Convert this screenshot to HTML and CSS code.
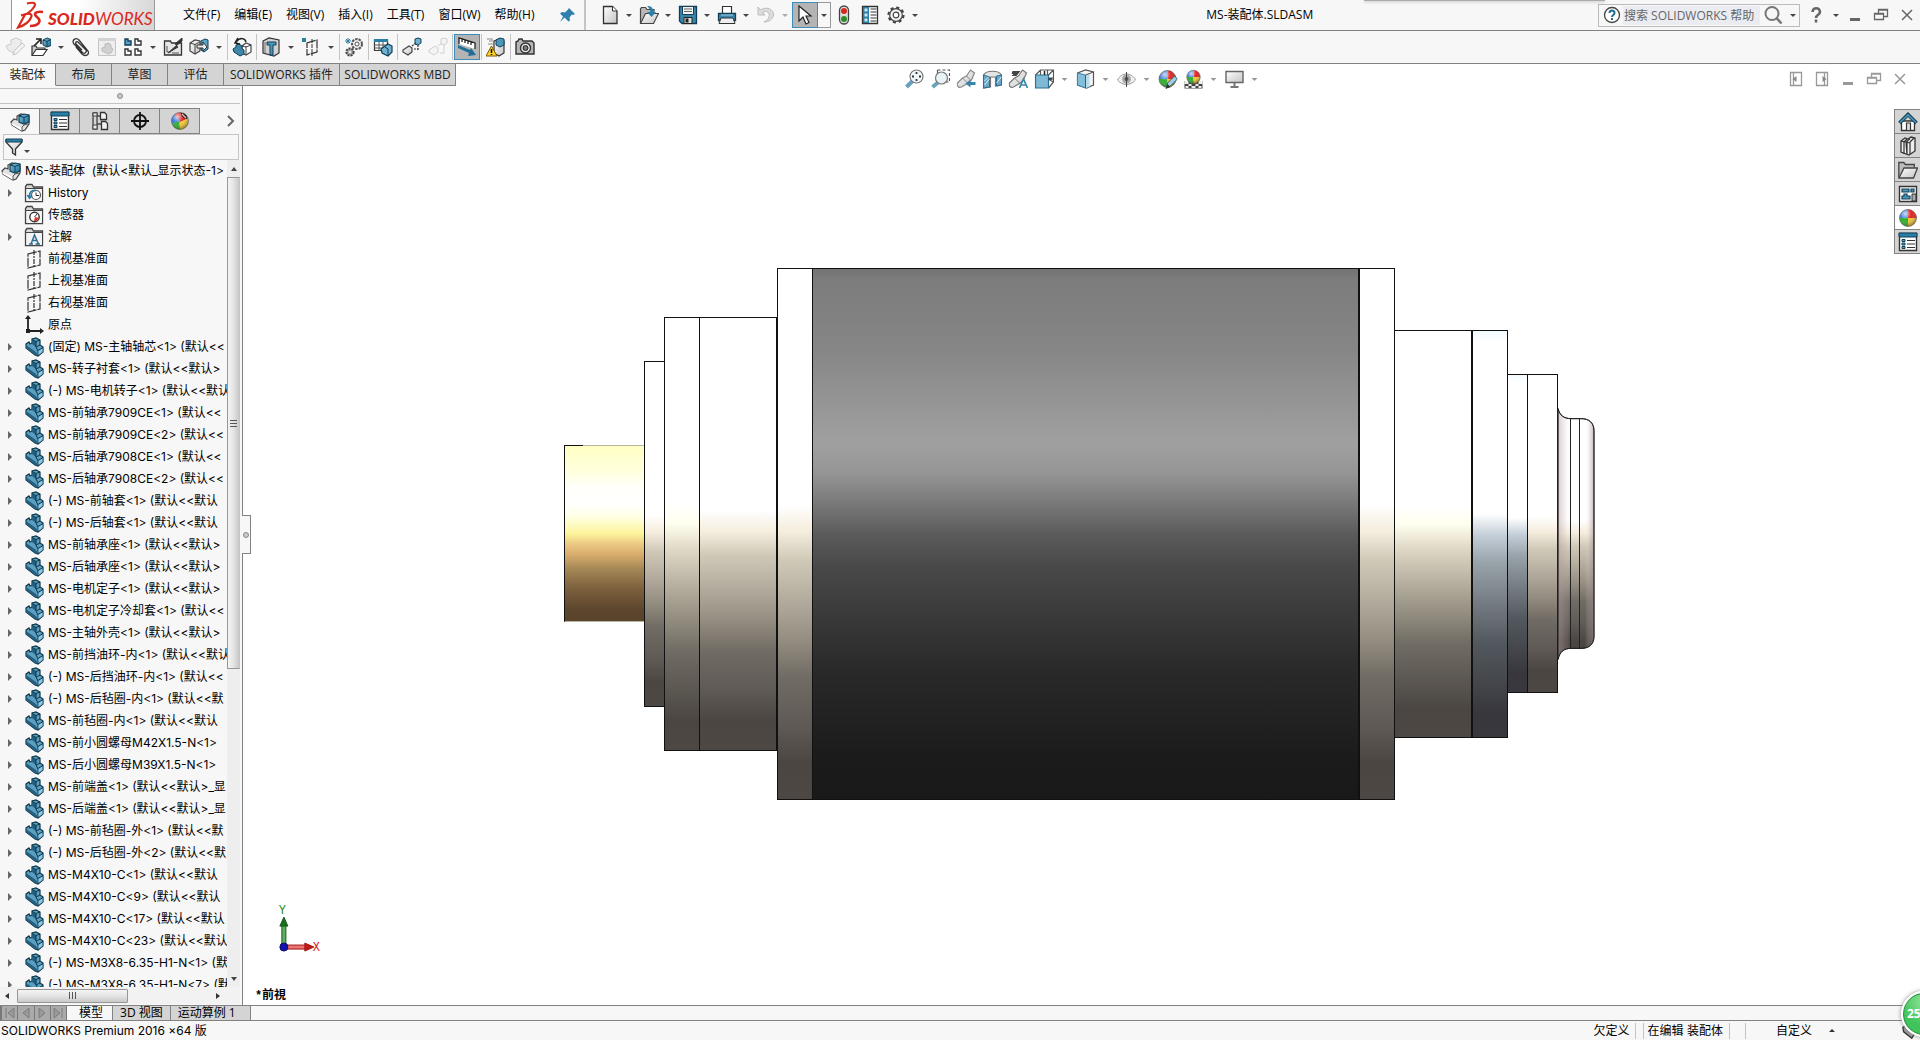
FILE: index.html
```html
<!DOCTYPE html>
<html lang="zh-CN">
<head>
    <meta charset="UTF-8">
    <meta name="viewport" content="width=device-width, initial-scale=1.0">
    <title>MS-装配体.SLDASM</title>
    <link rel="stylesheet" href="styles.css">
</head>
<body>
    <!-- 图标库 -->
    <svg class="defs" aria-hidden="true">
        <defs>
            <linearGradient id="gBlue" x1="0" y1="0" x2="1" y2="1"><stop offset="0" stop-color="#7fc0dc"/><stop offset="1" stop-color="#1d6c94"/></linearGradient>
            <linearGradient id="gGrey" x1="0" y1="0" x2="1" y2="1"><stop offset="0" stop-color="#ffffff"/><stop offset="1" stop-color="#c4c4c4"/></linearGradient>
            <radialGradient id="gShine" cx=".35" cy=".25" r=".8"><stop offset="0" stop-color="#fff" stop-opacity=".75"/><stop offset=".45" stop-color="#fff" stop-opacity="0"/><stop offset="1" stop-color="#000" stop-opacity=".45"/></radialGradient>
        </defs>
        <symbol id="part" viewBox="0 0 20 20">
            <path d="M2 7l3-2 1 2 2-1V2l4-1 4 2v5l3 2v5l-5 4-3-1L2 11z" fill="#5b9fc0" stroke="#0d3549" stroke-width="1.2"/>
            <path d="M2 8l10 7 2 4-3-1L2 11zM8 3l4 2v5l-4-3z" fill="#245f80"/>
            <path d="M8 2.500l4 2v5.500l2 4v4.500M12 4.500l4-1.500M14 13.500l5-3M12 10l4-2" fill="none" stroke="#0d3549"/>
            <path d="M14.500 14l4-2.500v3.500l-4 3z" fill="#8cc8e2"/>
        </symbol>
        <symbol id="asm" viewBox="0 0 20 20">
            <path d="M1 10l3-3 3 1V4l4-2 8 2v8l-4 6-3 1-10-6z" fill="#e2e2e2" stroke="#444" stroke-width="1.200"/>
            <path d="M1 11l11 5v3l-10-6z" fill="#fff"/>
            <path d="M9 4l5-2 5 1v7l-5 2-5-2z" fill="url(#gBlue)" stroke="#123f57" stroke-width="1.200"/>
            <path d="M9 4l5 1.500 5-2M14 5.500V12" fill="none" stroke="#123f57"/>
            <path d="M12 19v-4l2-2 4-1" fill="none" stroke="#555"/>
        </symbol>
        <symbol id="folder" viewBox="0 0 20 20">
            <path d="M1.500 18.500v-15l1.500-2h5l1.500 2.500h9v14.500z" fill="#d9d9d9" stroke="#444" stroke-width="1.300"/>
            <path d="M2.500 6h15.500v12H2.500z" fill="#f3f3f3"/>
            <path d="M1.500 5.500h17" stroke="#444"/>
        </symbol>
        <symbol id="history" viewBox="0 0 20 20">
            <use href="#folder"/>
            <circle cx="12" cy="12" r="4.500" fill="#fff" stroke="#555" stroke-width="1.200"/>
            <path d="M12 9.500V12.500h3" fill="none" stroke="#333"/>
            <path d="M12 7.500c-4-1-7 2-6.500 6M3.500 12l2 3 2.500-2.500" fill="none" stroke="#2b7fa6" stroke-width="1.800"/>
        </symbol>
        <symbol id="sensor" viewBox="0 0 20 20">
            <use href="#folder"/>
            <circle cx="10.500" cy="12" r="4.700" fill="#fff" stroke="#333" stroke-width="1.400"/>
            <path d="M10.500 12l2.500-3" stroke="#333"/>
            <path d="M11 12l4 1-3 3.200h-2z" fill="#d8341e"/>
        </symbol>
        <symbol id="note" viewBox="0 0 20 20">
            <use href="#folder"/>
            <path d="M5 17h4M11.500 17h4.500M7 17l3.500-9 4 9M8.500 13.500h4.500" fill="none" stroke="#2b6f94" stroke-width="1.500"/>
        </symbol>
        <symbol id="plane" viewBox="0 0 20 20">
            <path d="M4 5l12-3v14L4 19z" fill="none" stroke="#333" stroke-width="1.200" stroke-dasharray="9 1"/>
            <path d="M10 1v18" stroke="#333" stroke-width="1.200" stroke-dasharray="5 1 2 1"/>
        </symbol>
        <symbol id="origin" viewBox="0 0 20 20">
            <path d="M4 3v13h13" fill="none" stroke="#222" stroke-width="1.800"/>
            <path d="M4 0l3 4H1zM20 16l-4-3v6zM2 14h4v4H2z" fill="#222"/>
        </symbol>
        <symbol id="list" viewBox="0 0 20 20">
            <path d="M1.500 1.500h17v17h-17z" fill="#fff" stroke="#333" stroke-width="1.400"/>
            <path d="M1 1h18v4H1z" fill="#2b7fa6" stroke="#123f57"/>
            <path d="M4 7.500h3v2H4zM4 11h3v2H4zM4 14.500h3v2H4z" fill="#5aa5c8" stroke="#123f57"/>
            <path d="M9 8.500h8M9 12h8M9 15.500h8" stroke="#333" stroke-width="1.200"/>
        </symbol>
        <symbol id="config" viewBox="0 0 20 20">
            <path d="M3 2h4v16H3zM7 5h4M7 13h4" fill="none" stroke="#444" stroke-width="1.300"/>
            <path d="M3 2h4v3H3zM3 14h4v4H3z" fill="#eee" stroke="#444"/>
            <path d="M10.500 1.500h4l2 2v5h-6zM11.500 10.500h4l2 2v6h-6z" fill="#f2f2f2" stroke="#333" stroke-width="1.300"/>
        </symbol>
        <symbol id="target" viewBox="0 0 20 20">
            <circle cx="10" cy="10" r="6" fill="none" stroke="#111" stroke-width="1.800"/>
            <path d="M10 1v18M1 10h18" stroke="#111" stroke-width="1.800"/>
        </symbol>
        <symbol id="ball" viewBox="0 0 20 20">
            <path d="M10 10V1.500a8.500 8.500 0 0 0-8.500 8.500z" fill="#3c78d8"/>
            <path d="M10 10V1.500a8.500 8.500 0 0 1 8.500 8.500z" fill="#e02222"/>
            <path d="M10 10H1.500a8.500 8.500 0 0 0 8.500 8.500z" fill="#2fae2c"/>
            <path d="M10 10h8.500a8.500 8.500 0 0 1-8.500 8.500z" fill="#f3c637"/>
            <circle cx="10" cy="10" r="8.500" fill="url(#gShine)" stroke="#555" stroke-width=".6"/>
        </symbol>
        <symbol id="appearance" viewBox="0 0 20 20">
            <path d="M10 10L4 4a8.500 8.500 0 0 1 6-2.500z" fill="#e02222"/>
            <path d="M10 11V1.500a8.500 8.500 0 0 1 8 6z" fill="#e02222"/>
            <path d="M10 10V18.500a8.500 8.500 0 0 1-8-6z" fill="#2fae2c"/>
            <path d="M4.500 3.500L10 10l-8 2.500a8.500 8.500 0 0 1 2.500-9z" fill="#3c78d8"/>
            <path d="M9 11.500l9-4a8.500 8.500 0 0 1-8 11z" fill="#f6c934"/>
            <circle cx="10" cy="10" r="8.500" fill="url(#gShine)" stroke="#555" stroke-width=".6"/>
            <path d="M11 2c4 0 7 3 6 6-3 0-6-3-6-6z" fill="#222"/>
            <path d="M12 3l4 4" stroke="#d9b7b0" stroke-width="1.500"/>
        </symbol>
        <symbol id="funnel" viewBox="0 0 20 20">
            <path d="M2 3h16v2l-6.500 7v6l-3-2v-4L2 5z" fill="url(#gGrey)" stroke="#333" stroke-width="1.300"/>
            <path d="M2 2h16v3H2z" fill="#2b7fa6" stroke="#123f57"/>
        </symbol>
        <symbol id="doc" viewBox="0 0 20 20">
            <path d="M3.500 1.500h9l4.500 4.500v12.500H3.500z" fill="url(#gGrey)" stroke="#333" stroke-width="1.300"/>
            <path d="M12.500 1.500v4.500H17" fill="#fff" stroke="#333"/>
        </symbol>
        <symbol id="open" viewBox="0 0 20 20">
            <path d="M1.500 18V4l1-1.500h4l1.500 2h7V9" fill="#b9b9b9" stroke="#444" stroke-width="1.200"/>
            <path d="M1.500 18.500l5-10h13l-5 10z" fill="url(#gGrey)" stroke="#444" stroke-width="1.200"/>
            <path d="M8 1c5 0 6 2 6 6h3l-4.500 5L8 7h3c0-3-1-4-3-6z" fill="#2b7fa6"/>
        </symbol>
        <symbol id="save" viewBox="0 0 20 20">
            <path d="M1.500 1.500h17v17H4l-2.500-2.500z" fill="#3b85ab" stroke="#123f57" stroke-width="1.300"/>
            <path d="M4.500 1.500h11v8h-11z" fill="#f4f4f4" stroke="#123f57"/>
            <path d="M6 4h8M6 6.500h8" stroke="#666"/>
            <path d="M6 12.500h8v6H6z" fill="#ddd" stroke="#222"/><path d="M7.500 13.500h3v4h-3z" fill="#222"/>
        </symbol>
        <symbol id="print" viewBox="0 0 20 20">
            <path d="M5.500 8V1.500h9V8" fill="#fff" stroke="#333" stroke-width="1.200"/>
            <path d="M1.500 8.500h17v7h-17z" fill="#3b85ab" stroke="#123f57" stroke-width="1.300"/>
            <path d="M4 10h12" stroke="#9fd0e6"/>
            <path d="M4 13h12l2 5.500H2z" fill="#eee" stroke="#333"/>
        </symbol>
        <symbol id="undo" viewBox="0 0 20 20">
            <path d="M2 2v8h7L6.500 7.500c4-2.500 8 0 6.500 4.500-1 3-3 4-5 5 5 0 9-3 9.500-7C18 4 10 1 4.500 5z" fill="#ddd" stroke="#bdbdbd"/>
        </symbol>
        <symbol id="pointer" viewBox="0 0 20 20">
            <path d="M4 1v15l4-4 3 7 3-1.500-3-6.500h5z" fill="#fff" stroke="#222" stroke-width="1.200"/>
        </symbol>
        <symbol id="light" viewBox="0 0 20 20">
            <rect x="5.500" y="1" width="9" height="18" rx="4.500" fill="#ddd" stroke="#444" stroke-width="1.300"/>
            <circle cx="10" cy="6" r="3" fill="#d8281a"/><circle cx="10" cy="14" r="3" fill="#2e8b2a"/>
        </symbol>
        <symbol id="options" viewBox="0 0 20 20">
            <path d="M2.500 1.500h15v17h-15z" fill="#fff" stroke="#333" stroke-width="1.300"/>
            <path d="M3 2h6v16H3z" fill="#2b7fa6"/>
            <path d="M4.500 3.500h3v3h-3zM4.500 8.500h3v3h-3zM4.500 13.500h3v3h-3z" fill="#cfe6f1"/>
            <path d="M10.500 4h6M10.500 7h6M10.500 10h6M10.500 13h6M10.500 16h6" stroke="#333"/>
        </symbol>
        <symbol id="gear" viewBox="0 0 20 20">
            <circle cx="10" cy="10" r="7.300" fill="none" stroke="#444" stroke-width="2.600" stroke-dasharray="3 2.730"/>
            <circle cx="10" cy="10" r="6.300" fill="#f2f2f2" stroke="#444" stroke-width="1.200"/>
            <circle cx="10" cy="10" r="2.800" fill="#fff" stroke="#444" stroke-width="1.200"/>
        </symbol>
        <symbol id="pin" viewBox="0 0 20 20">
            <path d="M11 3l6 6-2 1-1-.5-2.500 3 .5 3-1.500 1-4-4L2 17l3-5.500-3-3L4 7l3 .5 3-3z" fill="#2d7fb0"/>
        </symbol>
        <symbol id="editpart" viewBox="0 0 20 20">
            <path d="M1 9l5-2V3l5-2 5 2v6l-6 8-7-4z" fill="#ececec" stroke="#ccc"/>
            <path d="M8 18l1-4 8-8 3 2.500-8 8z" fill="#f2f2f2" stroke="#c4c4c4"/>
        </symbol>
        <symbol id="insert" viewBox="0 0 20 20">
            <path d="M1 18V9h4l1 2h8v2" fill="#ccc" stroke="#333" stroke-width="1.200"/>
            <path d="M1 18.500l4-6h11l-4 6z" fill="#fff" stroke="#333" stroke-width="1.200"/>
            <path d="M3 9l6-6M5 2h5v5" fill="none" stroke="#222" stroke-width="1.600"/>
            <path d="M12 3l4-2 4 1.500v6L16 10l-4-2z" fill="url(#gBlue)" stroke="#123f57"/><path d="M12 3l4 1.500 4-2M16 4.500V10" fill="none" stroke="#123f57"/>
        </symbol>
        <symbol id="clip" viewBox="0 0 20 20">
            <path d="M5 10l6 7c3 3 8 1 6-3L8 3C5 0 0 3 3 7l9 9c2 1 4-1 3-3L7 5c-1-1-3 0-2 2l6 6" fill="none" stroke="#333" stroke-width="1.300"/>
        </symbol>
        <symbol id="window" viewBox="0 0 20 20">
            <path d="M1.500 1.500h17v17h-17z" fill="#eee" stroke="#c4c4c4"/><path d="M1 1h18v3H1z" fill="#d3d3d3"/>
            <path d="M5 11l3-1V7l4-1 2 2v3l2 1-2 4-3 1-6-3z" fill="#d0d0d0" stroke="#bbb"/>
        </symbol>
        <symbol id="pattern" viewBox="0 0 20 20">
            <path d="M2 2h3v2h3v4H2z" fill="#5aa5c8" stroke="#123f57" stroke-width="1.400"/>
            <path d="M12 2h3v2h3v4h-6zM2 12h3v2h3v4H2zM12 12h3v2h3v4h-6z" fill="#fff" stroke="#333" stroke-width="1.400"/>
        </symbol>
        <symbol id="smart" viewBox="0 0 20 20">
            <path d="M1.500 18V4h6l1 2h10v12z" fill="#e5e5e5" stroke="#333" stroke-width="1.300"/>
            <path d="M19 1l-7 6 2 1-9 8 10-6-2-1 6-5z" fill="#333" stroke="#333"/>
            <path d="M4 9v6h4M9 16h7" fill="none" stroke="#555"/>
        </symbol>
        <symbol id="move" viewBox="0 0 20 20">
            <path d="M1 6l5-3 5 1v10l-5 3-5-3z" fill="url(#gGrey)" stroke="#444" stroke-width="1.200"/>
            <path d="M12 4l4-2 3 1v9l-4 3-3-2z" fill="#5aa5c8" stroke="#123f57"/>
            <path d="M6 7v9M1 6l5 1.500L11 5" fill="none" stroke="#444"/>
            <path d="M8 8h6V5l4 5-4 4v-3H8z" fill="#eee" stroke="#333"/>
        </symbol>
        <symbol id="hidden" viewBox="0 0 20 20">
            <path d="M10 9l4-3 5 2v7l-5 3-4-2z" fill="#fff" stroke="#444" stroke-width="1.200"/>
            <path d="M14 9v9M10 9l4 1 5-2" fill="none" stroke="#444"/>
            <path d="M1 12l3-2V8l3-1 3 2v3l2 1v4l-4 2-6-4z" fill="#3f87a8" stroke="#123f57"/>
            <path d="M4 5c4-5 9-4 10 0M6 1L3 6l5 1" fill="none" stroke="#222" stroke-width="1.500"/>
        </symbol>
        <symbol id="feature" viewBox="0 0 20 20">
            <path d="M2 4l6-3 10 2v13l-5 3-11-3z" fill="#d2d2d2" stroke="#333" stroke-width="1.200"/>
            <path d="M6 5h9v3h-3v10H9V8H6z" fill="#4b98bb" stroke="#123f57"/><path d="M4 5v11" stroke="#777"/>
        </symbol>
        <symbol id="refgeo" viewBox="0 0 20 20">
            <path d="M1 1h4v4H1z" fill="#2b7fa6"/>
            <path d="M6 6l10-3v12L6 18z" fill="none" stroke="#333" stroke-width="1.200" stroke-dasharray="9 1"/><path d="M11 2v17" stroke="#333" stroke-dasharray="4 1"/>
        </symbol>
        <symbol id="motion" viewBox="0 0 20 20">
            <circle cx="13" cy="7" r="5" fill="#eee" stroke="#555" stroke-width="2" stroke-dasharray="2.500 1"/><circle cx="13" cy="7" r="2" fill="#fff" stroke="#555"/>
            <circle cx="6" cy="15" r="3.600" fill="#aaa" stroke="#444" stroke-width="2" stroke-dasharray="2 1"/><circle cx="6" cy="15" r="1" fill="#fff"/>
            <path d="M4 1v6M1 4h6M2 2l4 4M6 2L2 6" stroke="#2b7fa6"/>
        </symbol>
        <symbol id="bom" viewBox="0 0 20 20">
            <path d="M1.500 2.500h13v11h-13z" fill="#fff" stroke="#333" stroke-width="1.200"/><path d="M1 2h14v3H1z" fill="#2b7fa6"/>
            <path d="M6 5v9M10 5v9M1 8h14M1 11h14" stroke="#555"/>
            <path d="M8 12l4-3 3-2 4 2v6l-4 4-6-3z" fill="#6fb1cf" stroke="#123f57" stroke-width="1.200"/><path d="M12 10l3 2v6" fill="none" stroke="#123f57"/>
        </symbol>
        <symbol id="explode" viewBox="0 0 20 20">
            <path d="M1 13l3-2 3-2 3 2v4l-4 3-5-3z" fill="url(#gGrey)" stroke="#444" stroke-width="1.200"/>
            <path d="M13 2l3-1 3 1v4l-3 2-3-1z" fill="#6fb1cf" stroke="#123f57"/><path d="M10 9l4-3M16 8v5M12 12h4" stroke="#333" stroke-width="1.200" stroke-dasharray="2 1"/>
        </symbol>
        <symbol id="sketchline" viewBox="0 0 20 20">
            <g opacity=".3"><path d="M1 13l3-2 3-2 3 2v4l-4 3-5-3z" fill="#eee" stroke="#777"/><path d="M13 2l3-1 3 1v4l-3 2-3-1z" fill="#eee" stroke="#777"/><path d="M10 9l4-3M16 8v8M12 16h4" fill="none" stroke="#777"/></g>
        </symbol>
        <symbol id="ruler" viewBox="0 0 20 20">
            <path d="M2 1l16 5v6L2 7z" fill="#fff"/><path d="M2 7V1l16 5v6M5 2v3M8 3v3M11 4v3M14 5v3" fill="none" stroke="#222" stroke-width="1.300"/>
            <path d="M1 8l12 5 1-2 5 7-8 1 1-3L1 11z" fill="#1f6e98"/>
        </symbol>
        <symbol id="warn" viewBox="0 0 20 20">
            <path d="M3 4h4M2 7h5M1 2h6" stroke="#888"/>
            <path d="M8 4l5-2 5 2v12l-5 3-5-3z" fill="url(#gGrey)" stroke="#333" stroke-width="1.200"/>
            <path d="M10 3l4-2 4 1v6l-4 2-4-2z" fill="#4b98bb" stroke="#123f57"/>
            <path d="M5.500 9l5.500 10H0z" fill="#ffd42a" stroke="#7b5a00"/><path d="M5.500 12v4M5.500 17v1" stroke="#111" stroke-width="1.600"/>
        </symbol>
        <symbol id="camera" viewBox="0 0 20 20">
            <path d="M1 5l2-1 1-2h3l1 2h9l2 2v11H1z" fill="#b5b5b5" stroke="#333" stroke-width="1.400"/>
            <circle cx="10.500" cy="11" r="5" fill="#eee" stroke="#333" stroke-width="1.400"/><circle cx="10.500" cy="11" r="2.500" fill="#777" stroke="#222"/>
        </symbol>
        <symbol id="zoomfit" viewBox="0 0 20 20">
            <path d="M2 18l6-6" stroke="#6ba0bf" stroke-width="4"/>
            <circle cx="12" cy="7.500" r="6.500" fill="#eef6fa" stroke="#777" stroke-width="1.200"/>
            <path d="M12 3v2M12 10v2M7.500 7.500h2M14.500 7.500h2" stroke="#333" stroke-width="1.800"/>
        </symbol>
        <symbol id="zoomarea" viewBox="0 0 20 20">
            <path d="M7 1h12v12h-4M7 1v4" fill="none" stroke="#555" stroke-dasharray="3 2" stroke-width="1.200"/>
            <path d="M2 18l5-4" stroke="#6ba0bf" stroke-width="4"/><circle cx="11" cy="9" r="6" fill="#e6f2f6" stroke="#777" stroke-width="1.200"/>
        </symbol>
        <symbol id="prevview" viewBox="0 0 20 20">
            <path d="M1 14l5-5 4-2 4-6 4 3-3 7-3 3-7 4c-3 1-5-1-4-4z" fill="url(#gGrey)" stroke="#888" stroke-width="1.200"/><path d="M6 9l5 5M10 7l4 4" stroke="#888"/>
            <path d="M9 14.500l5-4v2.500h5v3h-5V18.500z" fill="#3b85ab"/>
        </symbol>
        <symbol id="section" viewBox="0 0 20 20">
            <path d="M1 6c3-5 15-5 18 0v10l-6 1V8H8v10l-7 1z" fill="#e5e5e5" stroke="#777" stroke-width="1.200"/>
            <path d="M1 6l6 2v10l-6 1zM14 7l5-1v10l-5 1z" fill="#69a8c8" stroke="#2b6f94"/><path d="M2 16l5-6M2 12l4-4M14 14l5-6" stroke="#d9eef7"/>
        </symbol>
        <symbol id="dynview" viewBox="0 0 20 20">
            <path d="M4 2h8L8 7H3l2-2H3z" fill="#444"/><path d="M1 14l5-5 4-2 4-6 4 3-3 7-3 3-7 4c-3 1-5-1-4-4z" fill="url(#gGrey)" stroke="#777" stroke-width="1.200"/><path d="M6 9l5 5" stroke="#777"/>
            <path d="M11 19l4-9 4 9M12 16h6" fill="none" stroke="#3b85ab" stroke-width="1.700"/>
        </symbol>
        <symbol id="orient" viewBox="0 0 20 20">
            <path d="M1 6l5-5h13v12l-5 6M6 1v5M19 1l-5 5M13 1v6M8 7l11 6M14 9h5" fill="none" stroke="#555" stroke-width="1.200"/>
            <path d="M1 6h13v13H1z" fill="#7fb9d5" stroke="#2b6f94" stroke-width="1.200"/><path d="M10 6V2M14 10h4" stroke="#222" stroke-width="1.500"/>
        </symbol>
        <symbol id="display" viewBox="0 0 20 20">
            <path d="M2 4l8-3 8 2v13l-7 3-9-3z" fill="#f4f4f4" stroke="#555" stroke-width="1.200"/>
            <path d="M2 4l8 2v13l-8-3z" fill="#84bfda" stroke="#3b85ab"/><path d="M10 6l4-1.200V18l-4 1z" fill="#b8dcec"/><path d="M10 6l8-3M10 6v13" stroke="#555"/>
        </symbol>
        <symbol id="eye" viewBox="0 0 20 20">
            <path d="M1 11c4-8 14-8 18 0-5 6-13 6-18 0z" fill="#f1f1f1" stroke="#999"/>
            <circle cx="10" cy="10" r="4.500" fill="#aaa"/><circle cx="10" cy="10" r="2" fill="#555"/><path d="M10 3v15" stroke="#444"/>
        </symbol>
        <symbol id="editcolor" viewBox="0 0 20 20">
            <use href="#ball"/><path d="M9 19l1-5 7-7 3 3-7 7z" fill="#9fcde2" stroke="#31576b"/><path d="M8 20l2-5 3 3z" fill="#333"/>
        </symbol>
        <symbol id="scene" viewBox="0 0 20 20">
            <path d="M1 12h18v7.500H1z" fill="#444"/><path d="M1 12h4v3H1zM15 12h4v3h-4zM5 15h3v2H5zM12 15h3v2h-3zM8 17h4v2H8zM2 17h3v2H2zM15 17h3v2h-3z" fill="#eee"/>
            <use href="#ball" x="2" y="0" width="16" height="16"/>
        </symbol>
        <symbol id="monitor" viewBox="0 0 20 20">
            <path d="M1.500 2.500h17v11h-17z" fill="url(#gGrey)" stroke="#666" stroke-width="1.400"/><path d="M9 14h2v3h3v2H6v-2h3z" fill="#777"/>
        </symbol>
        <symbol id="prevpane" viewBox="0 0 20 20"><path d="M4.500 3.500h11v13h-11zM7.500 3v13" fill="none" stroke="#999" stroke-width="1.300"/><path d="M10.500 7v6L6.500 10z" fill="#888"/></symbol>
        <symbol id="nextpane" viewBox="0 0 20 20"><path d="M4.500 3.500h11v13h-11zM12.500 3v13" fill="none" stroke="#999" stroke-width="1.300"/><path d="M10.500 7v6l4-3z" fill="#888"/></symbol>
        <symbol id="min" viewBox="0 0 20 20"><path d="M5 13h10v3H5z" fill="currentColor"/></symbol>
        <symbol id="restore" viewBox="0 0 20 20"><path d="M7.500 8V4.500h9v7H13M3.500 8.500h9v6h-9zM3.500 9h9M7.500 5h9" fill="none" stroke="currentColor" stroke-width="1.300"/></symbol>
        <symbol id="close" viewBox="0 0 20 20"><path d="M5 5l10 10M15 5L5 15" stroke="currentColor" stroke-width="1.500"/></symbol>
        <symbol id="chevron" viewBox="0 0 20 20"><path d="M8 5l5 5-5 5" fill="none" stroke="#666" stroke-width="2"/></symbol>
        <symbol id="help" viewBox="0 0 20 20"><circle cx="10" cy="10" r="7.500" fill="#fff" stroke="#444" stroke-width="1.300"/><path d="M7.500 8c0-3.500 5-3.500 5 0 0 2-2.500 2-2.500 4M10 13v2" fill="none" stroke="#1f6e98" stroke-width="2"/></symbol>
        <symbol id="question" viewBox="0 0 20 20"><path d="M6.500 7c0-5 7.500-5 7.500 0 0 3-4 2.500-4 6M10 14.500v3" fill="none" stroke="#666" stroke-width="2.600"/></symbol>
        <symbol id="search" viewBox="0 0 20 20"><circle cx="9" cy="8.500" r="6.500" fill="none" stroke="#777" stroke-width="2"/><path d="M13.500 13l5 5.500" stroke="#777" stroke-width="2.600"/></symbol>
        <symbol id="home" viewBox="0 0 20 20">
            <path d="M3.500 9h13v9.500h-13z" fill="#fff" stroke="#333" stroke-width="1.300"/><path d="M8.500 18v-7h4v7" fill="#ddd" stroke="#333" stroke-width="1.200"/>
            <path d="M1.500 11L10 2.500l8.500 8.500" fill="none" stroke="#123f57" stroke-width="3.600"/><path d="M2 10.500L10 2.800l8 7.700" fill="none" stroke="#4b98bb" stroke-width="1.600"/>
        </symbol>
        <symbol id="books" viewBox="0 0 20 20">
            <path d="M3 5l4-3 3 1 3-2 4 1v13l-6 4-8-3z" fill="#eee" stroke="#333" stroke-width="1.300"/><path d="M3 5l3 1v12M6 6l3-3M9 4.500v14l-1-12 4-4M12 6v12M12 6l4-4M3 5l9 2" fill="none" stroke="#333" stroke-width="1.200"/>
        </symbol>
        <symbol id="explorer" viewBox="0 0 20 20">
            <path d="M.8 17.500v-15h5l1.500 2h9v3" fill="#bbb" stroke="#444" stroke-width="1.300"/><path d="M1 18l5-10h13.500l-4 10z" fill="url(#gGrey)" stroke="#444" stroke-width="1.300"/>
        </symbol>
        <symbol id="palette" viewBox="0 0 20 20">
            <path d="M1.500 2.500h17v15h-17z" fill="#fff" stroke="#333" stroke-width="1.400"/>
            <path d="M4 5h7v3H4zM13 5h3v3h-3zM6 10h3v2h3v3H4v-3h2z" fill="#4b98bb" stroke="#123f57" stroke-width="1.200"/><path d="M14 10h4v7h-4z" fill="#aaa" stroke="#333"/>
        </symbol>
    </svg>

    <header class="titlebar">
        <div class="logo">
            <svg class="logo-mark" viewBox="0 0 28 28" aria-hidden="true">
                <path d="M11 2.500c6-1.500 10-1 7 3.500-2 3-5 6-9 7.500" fill="none" stroke="#da291c" stroke-width="2.200"/>
                <path d="M5 14.500c8-3 12-2 10 2-2 5-7 8-13 10l7-13" fill="none" stroke="#da291c" stroke-width="2.200"/>
                <path d="M27 11c-8-1-10 2-6 5 5 4 2 9-7 9" fill="none" stroke="#da291c" stroke-width="2.600"/>
            </svg>
            <span class="logo-text"><b>SOLID</b>WORKS</span>
        </div>
        <nav class="menu">
            <button>文件(F)</button>
            <button>编辑(E)</button>
            <button>视图(V)</button>
            <button>插入(I)</button>
            <button>工具(T)</button>
            <button>窗口(W)</button>
            <button>帮助(H)</button>
        </nav>
        <button class="ico pin" aria-label="固定"><svg><use href="#pin"/></svg></button>
        <div class="quick">
            <button class="ico" aria-label="新建"><svg><use href="#doc"/></svg></button><button class="drop" aria-label="更多"></button>
            <button class="ico" aria-label="打开"><svg><use href="#open"/></svg></button><button class="drop" aria-label="更多"></button>
            <button class="ico" aria-label="保存"><svg><use href="#save"/></svg></button><button class="drop" aria-label="更多"></button>
            <button class="ico" aria-label="打印"><svg><use href="#print"/></svg></button><button class="drop" aria-label="更多"></button>
            <button class="ico" aria-label="撤消"><svg><use href="#undo"/></svg></button><button class="drop dim" aria-label="更多"></button>
            <button class="ico on" aria-label="选择"><svg><use href="#pointer"/></svg></button><button class="drop boxed" aria-label="更多"></button>
            <button class="ico" aria-label="重建模型"><svg><use href="#light"/></svg></button>
            <button class="ico" aria-label="文件属性"><svg><use href="#options"/></svg></button>
            <button class="ico" aria-label="选项"><svg><use href="#gear"/></svg></button><button class="drop" aria-label="更多"></button>
        </div>
        <h1 class="doc-title">MS-装配体.SLDASM</h1>
        <div class="search">
            <svg><use href="#help"/></svg>
            <input type="text" placeholder="搜索 SOLIDWORKS 帮助" aria-label="搜索帮助">
            <button class="ico" aria-label="搜索"><svg><use href="#search"/></svg></button><button class="drop" aria-label="更多"></button>
        </div>
        <div class="win-btns">
            <button class="ico" aria-label="帮助"><svg><use href="#question"/></svg></button><button class="drop" aria-label="更多"></button>
            <button class="ico" aria-label="最小化"><svg><use href="#min"/></svg></button>
            <button class="ico" aria-label="还原"><svg><use href="#restore"/></svg></button>
            <button class="ico" aria-label="关闭"><svg><use href="#close"/></svg></button>
        </div>
        <div class="top-shadow"></div>
    </header>

    <div class="toolbar">
        <button class="ico" aria-label="编辑零部件"><svg><use href="#editpart"/></svg></button>
        <button class="ico" aria-label="插入零部件"><svg><use href="#insert"/></svg></button><button class="drop" aria-label="更多"></button>
        <button class="ico" aria-label="配合"><svg><use href="#clip"/></svg></button>
        <button class="ico" aria-label="零部件预览窗口"><svg><use href="#window"/></svg></button>
        <button class="ico" aria-label="线性零部件阵列"><svg><use href="#pattern"/></svg></button><button class="drop" aria-label="更多"></button>
        <button class="ico" aria-label="智能扣件"><svg><use href="#smart"/></svg></button>
        <button class="ico" aria-label="移动零部件"><svg><use href="#move"/></svg></button><button class="drop" aria-label="更多"></button>
        <i class="sep"></i>
        <button class="ico" aria-label="显示隐藏的零部件"><svg><use href="#hidden"/></svg></button>
        <i class="sep"></i>
        <button class="ico" aria-label="装配体特征"><svg><use href="#feature"/></svg></button><button class="drop" aria-label="更多"></button>
        <button class="ico" aria-label="参考几何体"><svg><use href="#refgeo"/></svg></button><button class="drop" aria-label="更多"></button>
        <i class="sep"></i>
        <button class="ico" aria-label="新建运动算例"><svg><use href="#motion"/></svg></button>
        <i class="sep"></i>
        <button class="ico" aria-label="材料明细表"><svg><use href="#bom"/></svg></button>
        <i class="sep"></i>
        <button class="ico" aria-label="爆炸视图"><svg><use href="#explode"/></svg></button>
        <button class="ico" aria-label="爆炸直线草图"><svg><use href="#sketchline"/></svg></button>
        <i class="sep"></i>
        <button class="ico on" aria-label="Instant3D"><svg><use href="#ruler"/></svg></button>
        <i class="sep"></i>
        <button class="ico" aria-label="更新"><svg><use href="#warn"/></svg></button>
        <i class="sep"></i>
        <button class="ico" aria-label="拍快照"><svg><use href="#camera"/></svg></button>
    </div>

    <div class="cm-tabs">
        <button class="active">装配体</button>
        <button>布局</button>
        <button>草图</button>
        <button>评估</button>
        <button class="wide">SOLIDWORKS 插件</button>
        <button class="wide">SOLIDWORKS MBD</button>
    </div>

    <main class="work">
        <aside class="panel">
            <div class="grip"><i class="dot"></i></div>
            <div class="fm-tabs">
                <button class="active" aria-label="FeatureManager 设计树"><svg><use href="#asm"/></svg></button>
                <button aria-label="PropertyManager"><svg><use href="#list"/></svg></button>
                <button aria-label="ConfigurationManager"><svg><use href="#config"/></svg></button>
                <button aria-label="DimXpertManager"><svg><use href="#target"/></svg></button>
                <button aria-label="DisplayManager"><svg><use href="#appearance"/></svg></button>
                <button class="more" aria-label="更多标签"><svg><use href="#chevron"/></svg></button>
            </div>
            <label class="filter"><svg><use href="#funnel"/></svg><i class="caret"></i><input type="text" aria-label="过滤"></label>
            <div class="tree-wrap">
                <ul class="tree">
                    <li class="root"><svg><use href="#asm"/></svg>MS-装配体&nbsp; (默认&lt;默认_显示状态-1&gt;</li>
                    <li class="has"><svg><use href="#history"/></svg>History</li>
                    <li><svg><use href="#sensor"/></svg>传感器</li>
                    <li class="has"><svg><use href="#note"/></svg>注解</li>
                    <li><svg><use href="#plane"/></svg>前视基准面</li>
                    <li><svg><use href="#plane"/></svg>上视基准面</li>
                    <li><svg><use href="#plane"/></svg>右视基准面</li>
                    <li><svg><use href="#origin"/></svg>原点</li>
                    <li class="has"><svg><use href="#part"/></svg>(固定) MS-主轴轴芯&lt;1&gt; (默认&lt;&lt;</li>
                    <li class="has"><svg><use href="#part"/></svg>MS-转子衬套&lt;1&gt; (默认&lt;&lt;默认&gt;</li>
                    <li class="has"><svg><use href="#part"/></svg>(-) MS-电机转子&lt;1&gt; (默认&lt;&lt;默认</li>
                    <li class="has"><svg><use href="#part"/></svg>MS-前轴承7909CE&lt;1&gt; (默认&lt;&lt;</li>
                    <li class="has"><svg><use href="#part"/></svg>MS-前轴承7909CE&lt;2&gt; (默认&lt;&lt;</li>
                    <li class="has"><svg><use href="#part"/></svg>MS-后轴承7908CE&lt;1&gt; (默认&lt;&lt;</li>
                    <li class="has"><svg><use href="#part"/></svg>MS-后轴承7908CE&lt;2&gt; (默认&lt;&lt;</li>
                    <li class="has"><svg><use href="#part"/></svg>(-) MS-前轴套&lt;1&gt; (默认&lt;&lt;默认</li>
                    <li class="has"><svg><use href="#part"/></svg>(-) MS-后轴套&lt;1&gt; (默认&lt;&lt;默认</li>
                    <li class="has"><svg><use href="#part"/></svg>MS-前轴承座&lt;1&gt; (默认&lt;&lt;默认&gt;</li>
                    <li class="has"><svg><use href="#part"/></svg>MS-后轴承座&lt;1&gt; (默认&lt;&lt;默认&gt;</li>
                    <li class="has"><svg><use href="#part"/></svg>MS-电机定子&lt;1&gt; (默认&lt;&lt;默认&gt;</li>
                    <li class="has"><svg><use href="#part"/></svg>MS-电机定子冷却套&lt;1&gt; (默认&lt;&lt;</li>
                    <li class="has"><svg><use href="#part"/></svg>MS-主轴外壳&lt;1&gt; (默认&lt;&lt;默认&gt;</li>
                    <li class="has"><svg><use href="#part"/></svg>MS-前挡油环-内&lt;1&gt; (默认&lt;&lt;默认</li>
                    <li class="has"><svg><use href="#part"/></svg>(-) MS-后挡油环-内&lt;1&gt; (默认&lt;&lt;</li>
                    <li class="has"><svg><use href="#part"/></svg>(-) MS-后毡圈-内&lt;1&gt; (默认&lt;&lt;默</li>
                    <li class="has"><svg><use href="#part"/></svg>MS-前毡圈-内&lt;1&gt; (默认&lt;&lt;默认</li>
                    <li class="has"><svg><use href="#part"/></svg>MS-前小圆螺母M42X1.5-N&lt;1&gt;</li>
                    <li class="has"><svg><use href="#part"/></svg>MS-后小圆螺母M39X1.5-N&lt;1&gt;</li>
                    <li class="has"><svg><use href="#part"/></svg>MS-前端盖&lt;1&gt; (默认&lt;&lt;默认&gt;_显</li>
                    <li class="has"><svg><use href="#part"/></svg>MS-后端盖&lt;1&gt; (默认&lt;&lt;默认&gt;_显</li>
                    <li class="has"><svg><use href="#part"/></svg>(-) MS-前毡圈-外&lt;1&gt; (默认&lt;&lt;默</li>
                    <li class="has"><svg><use href="#part"/></svg>(-) MS-后毡圈-外&lt;2&gt; (默认&lt;&lt;默</li>
                    <li class="has"><svg><use href="#part"/></svg>MS-M4X10-C&lt;1&gt; (默认&lt;&lt;默认</li>
                    <li class="has"><svg><use href="#part"/></svg>MS-M4X10-C&lt;9&gt; (默认&lt;&lt;默认</li>
                    <li class="has"><svg><use href="#part"/></svg>MS-M4X10-C&lt;17&gt; (默认&lt;&lt;默认</li>
                    <li class="has"><svg><use href="#part"/></svg>MS-M4X10-C&lt;23&gt; (默认&lt;&lt;默认</li>
                    <li class="has"><svg><use href="#part"/></svg>(-) MS-M3X8-6.35-H1-N&lt;1&gt; (默</li>
                    <li class="has"><svg><use href="#part"/></svg>(-) MS-M3X8-6.35-H1-N&lt;7&gt; (默</li>
                </ul>
                <div class="vscroll"><i class="up"></i><div class="track"><div class="thumb"><i></i></div></div><i class="down"></i></div>
            </div>
            <div class="hscroll"><i class="left"></i><div class="track"><div class="thumb"><i></i></div></div><i class="right"></i></div>
            <button class="splitter" aria-label="收起面板"><i class="dot"></i></button>
        </aside>

        <section class="canvas">
            <svg class="model" viewBox="243 86 1677 920" role="img" aria-label="主轴装配体前视图">
                <defs>
                    <linearGradient id="brass" x2="0" y2="1"><stop offset="0" stop-color="#ffffc4"/><stop offset=".14" stop-color="#ffffdc"/><stop offset=".24" stop-color="#fffffa"/><stop offset=".33" stop-color="#fff"/><stop offset=".4" stop-color="#ffffe8"/><stop offset=".5" stop-color="#fdf59c"/><stop offset=".56" stop-color="#ecc884"/><stop offset=".62" stop-color="#d8ac6c"/><stop offset=".7" stop-color="#a58856"/><stop offset=".8" stop-color="#80633f"/><stop offset=".93" stop-color="#5c462d"/><stop offset="1" stop-color="#5a432b"/></linearGradient>
                    <linearGradient id="steel" x2="0" y2="1"><stop offset=".445" stop-color="#fff"/><stop offset=".495" stop-color="#f5eddd"/><stop offset=".55" stop-color="#d0c8b7"/><stop offset=".66" stop-color="#a59d90"/><stop offset=".705" stop-color="#918a7e"/><stop offset=".77" stop-color="#706b64"/><stop offset=".86" stop-color="#5f5a55"/><stop offset=".93" stop-color="#4b4642"/><stop offset="1" stop-color="#4d4844"/></linearGradient>
                    <linearGradient id="ivory" x2="0" y2="1"><stop offset=".43" stop-color="#fff"/><stop offset=".475" stop-color="#fffff0"/><stop offset=".53" stop-color="#e3dbc9"/><stop offset=".6" stop-color="#c0b8a8"/><stop offset=".69" stop-color="#959082"/><stop offset=".77" stop-color="#706c64"/><stop offset=".93" stop-color="#4b4642"/><stop offset="1" stop-color="#4d4844"/></linearGradient>
                    <linearGradient id="blued" x2="0" y2="1"><stop offset="0" stop-color="#f2faff"/><stop offset=".03" stop-color="#fff"/><stop offset=".45" stop-color="#fff"/><stop offset=".505" stop-color="#c2cdd7"/><stop offset=".57" stop-color="#99a3aa"/><stop offset=".67" stop-color="#757b82"/><stop offset=".77" stop-color="#51585d"/><stop offset=".86" stop-color="#45474c"/><stop offset=".94" stop-color="#37373d"/><stop offset="1" stop-color="#38383e"/></linearGradient>
                    <linearGradient id="dark" x2="0" y2="1"><stop offset="0" stop-color="#727272"/><stop offset=".02" stop-color="#7c7c7c"/><stop offset=".155" stop-color="#868686"/><stop offset=".225" stop-color="#919191"/><stop offset=".33" stop-color="#a0a0a0"/><stop offset=".385" stop-color="#959595"/><stop offset=".434" stop-color="#7d7d7d"/><stop offset=".503" stop-color="#5a5a5a"/><stop offset=".56" stop-color="#494949"/><stop offset=".64" stop-color="#3c3c3c"/><stop offset=".75" stop-color="#2a2a2a"/><stop offset=".92" stop-color="#1b1b1b"/><stop offset="1" stop-color="#19191a"/></linearGradient>
                    <linearGradient id="nutEdge"><stop offset="0" stop-color="#b09a9d" stop-opacity=".5"/><stop offset=".2" stop-color="#c9b4b4" stop-opacity=".2"/><stop offset=".35" stop-color="#fff" stop-opacity="0"/><stop offset=".75" stop-color="#fff" stop-opacity="0"/><stop offset=".9" stop-color="#b49fa2" stop-opacity=".3"/><stop offset="1" stop-color="#9c8486" stop-opacity=".6"/></linearGradient>
                </defs>
                <g stroke="#111" shape-rendering="crispEdges">
                    <path d="M563.500 445.500h80v177h-80z" fill="url(#brass)" stroke="none"/>
                    <path d="M563.500 622V445.500H582" fill="none"/>
                    <path d="M582 445.500h62M564 622.500h80" stroke="#b5b5a0"/>
                    <path d="M644.500 361.500h20v346h-20z" fill="url(#steel)"/>
                    <path d="M664.500 317.500h35v434h-35z" fill="url(#ivory)"/>
                    <path d="M699.500 317.500h77v434h-77z" fill="url(#steel)"/>
                    <path d="M777.500 268.500h35v532h-35zM1359.500 268.500h35v532h-35z" fill="url(#steel)"/>
                    <path d="M812.500 268.500h546v532h-546z" fill="url(#dark)"/>
                    <path d="M1394.500 330.500h77v408h-77z" fill="url(#ivory)"/>
                    <path d="M1472.500 330.500h35v408h-35z" fill="url(#blued)"/>
                    <path d="M1507.500 374.500h20v319h-20z" fill="url(#blued)"/>
                    <path d="M1527.500 374.500h31v319h-31z" fill="url(#steel)"/>
                </g>
                <g stroke="#222">
                    <path d="M1558.500 409c2 7 6 10 13 10h10c8 0 13 4 13 12v206c0 8-5 12-13 12h-10c-7 0-11 3-13 11z" fill="url(#steel)"/>
                    <path d="M1558.500 409c2 7 6 10 13 10h10c8 0 13 4 13 12v206c0 8-5 12-13 12h-10c-7 0-11 3-13 11z" fill="url(#nutEdge)"/>
                    <path d="M1571.500 419v230M1580.500 419v230" shape-rendering="crispEdges"/>
                </g>
                <!-- 坐标系 -->
                <path d="M281 945v-20h4v20z" fill="#5fae62" stroke="#145c18"/>
                <path d="M283 918l4 9h-8z" fill="#1a6e1e" stroke="#145c18"/>
                <path d="M286 946h20v4h-20z" fill="#ee7474" stroke="#a11515"/>
                <path d="M313 948l-9-4v8z" fill="#c01a1a" stroke="#a11515"/>
                <circle cx="283" cy="948" r="4" fill="#1414a8" stroke="#0a0a70"/>
                <text class="axis" x="278" y="915" fill="#1c8a1c">Y</text>
                <text class="axis" x="312" y="952" fill="#e01a1a">X</text>
                <text class="view-name" x="254" y="1000">*前視</text>
            </svg>
            <div class="hud">
                <button class="ico" aria-label="整屏显示全图"><svg><use href="#zoomfit"/></svg></button>
                <button class="ico" aria-label="局部放大"><svg><use href="#zoomarea"/></svg></button>
                <button class="ico" aria-label="上一视图"><svg><use href="#prevview"/></svg></button>
                <button class="ico" aria-label="剖面视图"><svg><use href="#section"/></svg></button>
                <button class="ico" aria-label="动态注解视图"><svg><use href="#dynview"/></svg></button>
                <button class="ico" aria-label="视图定向"><svg><use href="#orient"/></svg></button><button class="drop" aria-label="更多"></button>
                <button class="ico" aria-label="显示样式"><svg><use href="#display"/></svg></button><button class="drop" aria-label="更多"></button>
                <button class="ico" aria-label="隐藏/显示项目"><svg><use href="#eye"/></svg></button><button class="drop" aria-label="更多"></button>
                <button class="ico" aria-label="编辑外观"><svg><use href="#editcolor"/></svg></button>
                <button class="ico" aria-label="应用布景"><svg><use href="#scene"/></svg></button><button class="drop" aria-label="更多"></button>
                <button class="ico" aria-label="视图设定"><svg><use href="#monitor"/></svg></button><button class="drop" aria-label="更多"></button>
            </div>
            <div class="doc-btns">
                <button class="ico" aria-label="展开左窗格"><svg><use href="#prevpane"/></svg></button>
                <button class="ico" aria-label="展开右窗格"><svg><use href="#nextpane"/></svg></button>
                <button class="ico" aria-label="最小化"><svg><use href="#min"/></svg></button>
                <button class="ico" aria-label="还原"><svg><use href="#restore"/></svg></button>
                <button class="ico" aria-label="关闭"><svg><use href="#close"/></svg></button>
            </div>
            <div class="taskpane">
                <button aria-label="SOLIDWORKS 资源"><svg><use href="#home"/></svg></button>
                <button aria-label="设计库"><svg><use href="#books"/></svg></button>
                <button aria-label="文件探索器"><svg><use href="#explorer"/></svg></button>
                <button aria-label="视图调色板"><svg><use href="#palette"/></svg></button>
                <button class="active" aria-label="外观、布景和贴图"><svg><use href="#ball"/></svg></button>
                <button aria-label="自定义属性"><svg><use href="#list"/></svg></button>
            </div>
        </section>
    </main>

    <div class="sheet-tabs">
        <div class="nav">
            <button aria-label="第一个"><svg viewBox="0 0 14 14"><path d="M3 2v10M11 2v10L5 7z"/></svg></button>
            <button aria-label="上一个"><svg viewBox="0 0 14 14"><path d="M10 2v10L4 7z"/></svg></button>
            <button aria-label="下一个"><svg viewBox="0 0 14 14"><path d="M4 2v10l6-5z"/></svg></button>
            <button aria-label="最后一个"><svg viewBox="0 0 14 14"><path d="M11 2v10M3 2v10l6-5z"/></svg></button>
        </div>
        <button class="active">模型</button>
        <button>3D 视图</button>
        <button>运动算例 1</button>
    </div>

    <footer class="status">
        <span class="product">SOLIDWORKS Premium 2016 x64 版</span>
        <span class="cell">欠定义</span>
        <span class="cell gap"></span>
        <span class="cell edit">在编辑 装配体</span>
        <span class="cell blank"></span>
        <span class="custom">自定义<i class="caret-up"></i></span>
        <svg class="tag" viewBox="0 0 20 20" aria-hidden="true"><path d="M2 6l5-3 10 7-5 8L3 11z" fill="#999" stroke="#333" stroke-width="1.500"/></svg>
        <div class="badge">25</div>
    </footer>
</body>
</html>
```
FILE: styles.css
```css
* {
    box-sizing: border-box;
}
body {
    margin: 0;
    height: 100vh;
    display: flex;
    flex-direction: column;
    overflow: hidden;
    font: 12px/16px "Open Sans", "Noto Sans CJK SC", sans-serif;
    color: #000;
    background: #f7f7f7;
}
button,
input {
    font: inherit;
    color: inherit;
    margin: 0;
    padding: 0;
    border: 0;
    background: none;
    white-space: nowrap;
}
.defs {
    position: absolute;
    width: 0;
    height: 0;
}
.ico {
    width: 26px;
    height: 26px;
    flex: none;
    display: flex;
    align-items: center;
    justify-content: center;
}
.ico svg {
    width: 20px;
    height: 20px;
}
.ico.on {
    background: #b4b4b4;
    border: 1px solid #3c8dbc;
}
.drop {
    width: 13px;
    height: 26px;
    flex: none;
    display: flex;
    align-items: center;
    justify-content: center;
}
.drop::before,
.caret {
    content: "";
    border: 3px solid transparent;
    border-top-color: #444;
    border-bottom: 0;
}
.drop.dim::before {
    border-top-color: #aaa;
}
.drop.boxed {
    border: 1px solid #999;
    border-left: 0;
}

/* 标题栏 */
.titlebar {
    height: 31px;
    flex: none;
    display: flex;
    align-items: center;
    border-bottom: 1px solid #828282;
    position: relative;
}
.logo {
    width: 144px;
    height: 30px;
    margin-left: 11px;
    padding-left: 4px;
    display: flex;
    align-items: center;
    border-left: 1px solid #999;
    border-right: 1px solid #999;
    background: linear-gradient(100deg, #fff 45%, #d6d6d6);
}
.logo-mark {
    width: 28px;
    height: 28px;
    flex: none;
}
.logo-text {
    margin: 8px 0 0 4px;
    font: italic 17px/20px "Lato", sans-serif;
    color: #da291c;
}
.logo-text b {
    font-weight: 900;
}
.menu {
    display: flex;
    gap: 14px;
    margin-left: 28px;
}
.pin {
    margin-left: 20px;
}
.quick {
    display: flex;
    height: 30px;
    align-items: center;
    margin-left: 3px;
    padding-left: 11px;
    border-left: 2px solid #c4c4c4;
}
.doc-title {
    flex: 1;
    margin: 0;
    text-align: center;
    font-size: 12px;
    font-weight: normal;
}
.search {
    width: 202px;
    height: 23px;
    display: flex;
    align-items: center;
    border: 1px solid #bbb;
    padding-left: 3px;
}
.search > svg {
    width: 20px;
    height: 20px;
    flex: none;
}
.search input {
    flex: 1;
    min-width: 0;
    height: 19px;
    margin-left: 1px;
    padding-left: 1px;
    background: #eaecf2;
    color: #666;
}
.search input::placeholder {
    color: #666;
    opacity: 1;
}
.win-btns {
    display: flex;
    color: #666;
    margin-left: 3px;
}
.top-shadow {
    position: absolute;
    top: 0;
    right: 315px;
    width: 241px;
    height: 1px;
    background: #aaa;
    box-shadow: 0 1px 3px #aaa;
}

/* 命令工具栏 */
.toolbar {
    height: 33px;
    flex: none;
    display: flex;
    align-items: center;
    padding-left: 2px;
    border-bottom: 1px solid #828282;
}
.toolbar .drop {
    width: 14px;
}
.sep {
    width: 1px;
    height: 26px;
    margin: 0 1px;
    background: #c4c4c4;
}
.cm-tabs {
    height: 22px;
    flex: none;
    display: flex;
    background: #fff;
}
.cm-tabs button {
    width: 56px;
    color: #222;
    background: #d4d4d4;
    border-right: 1px solid #828282;
    border-bottom: 1px solid #828282;
}
.cm-tabs .wide {
    width: 116px;
}
.cm-tabs .active {
    background: #f7f7f7;
    border-bottom-color: #f7f7f7;
}

/* 左侧面板 */
.work {
    flex: 1;
    min-height: 0;
    display: flex;
}
.panel {
    width: 243px;
    flex: none;
    display: flex;
    flex-direction: column;
    padding: 2px 2px 1px 0;
    border-right: 1px solid #828282;
    position: relative;
}
.dot {
    width: 6px;
    height: 6px;
    border: 1px solid #888;
    border-radius: 50%;
    background: #ccc;
}
.grip {
    height: 16px;
    flex: none;
    display: flex;
    align-items: center;
    justify-content: center;
    border-top: 1px solid #c4c4c4;
    border-bottom: 1px solid #c4c4c4;
}
.fm-tabs {
    display: flex;
    flex: none;
    height: 26px;
    margin-top: 4px;
}
.fm-tabs button {
    width: 40px;
    display: flex;
    align-items: center;
    justify-content: center;
    background: #d4d4d4;
    border: 1px solid #828282;
    border-left: 0;
}
.fm-tabs .active {
    background: #f7f7f7;
    border-bottom: 0;
}
.fm-tabs .more {
    width: 20px;
    margin-left: auto;
    background: none;
    border: 0;
}
.fm-tabs svg {
    width: 20px;
    height: 20px;
    flex: none;
}
.filter {
    height: 26px;
    flex: none;
    margin: 0 1px 0 3px;
    display: flex;
    align-items: center;
    border: 1px solid #c4c4c4;
}
.filter svg {
    width: 20px;
    height: 20px;
    flex: none;
}
.filter .caret {
    margin-top: 8px;
}
.filter input {
    flex: 1;
    min-width: 0;
}
.tree-wrap {
    flex: 1;
    min-height: 0;
    display: flex;
}
.tree {
    flex: 1;
    min-width: 0;
    margin: 0;
    padding: 0;
    list-style: none;
    overflow: hidden;
    font-family: "Inter", "Noto Sans CJK SC", sans-serif;
}
.tree li {
    height: 22px;
    display: flex;
    align-items: center;
    gap: 4px;
    padding-left: 24px;
    white-space: nowrap;
}
.tree li svg {
    width: 20px;
    height: 20px;
    flex: none;
}
.tree .root {
    padding-left: 1px;
}
.tree .has {
    padding-left: 8px;
}
.tree .has::before {
    content: "";
    margin-right: 8px;
    border: 4px solid transparent;
    border-left-color: #666;
    border-right: 0;
}
.vscroll {
    width: 13px;
    flex: none;
    display: flex;
    flex-direction: column;
    align-items: center;
    padding: 7px 0 6px;
    background: #eee;
}
.vscroll .track {
    flex: 1;
    width: 100%;
    margin: 6px 0;
}
.vscroll .thumb {
    height: 62%;
    display: flex;
    align-items: center;
    justify-content: center;
    border: 1px solid #979797;
    border-right-color: #c4c4c4;
    background: linear-gradient(90deg, #f4f4f4, #e6e6e6 45%, #c9c9c9);
}
.vscroll .thumb i {
    width: 7px;
    height: 7px;
    background: repeating-linear-gradient(#555 0 1px, transparent 1px 3px);
}
.up,
.down {
    border: 3px solid transparent;
}
.up {
    border-bottom: 4px solid #444;
    border-top: 0;
}
.down {
    border-top: 4px solid #444;
    border-bottom: 0;
}
.hscroll {
    height: 17px;
    flex: none;
    display: flex;
    align-items: center;
    padding: 0 20px 0 5px;
    background: #f2f2f2;
}
.hscroll .track {
    flex: 1;
    height: 14px;
    margin: 0 8px;
}
.hscroll .thumb {
    width: 58%;
    height: 14px;
    display: flex;
    align-items: center;
    justify-content: center;
    border: 1px solid #979797;
    border-radius: 1px;
    background: linear-gradient(#f4f4f4, #e6e6e6 45%, #c9c9c9);
}
.hscroll .thumb i {
    width: 7px;
    height: 7px;
    background: repeating-linear-gradient(90deg, #555 0 1px, transparent 1px 3px);
}
.left,
.right {
    border: 3px solid transparent;
}
.left {
    border-right: 4px solid #333;
    border-left: 0;
}
.right {
    border-left: 4px solid #333;
    border-right: 0;
}
.splitter {
    position: absolute;
    top: 429px;
    right: -9px;
    width: 9px;
    height: 39px;
    display: flex;
    align-items: center;
    justify-content: center;
    background: #f7f7f7;
    border: 1px solid #828282;
    border-left: 0;
    z-index: 1;
}
.splitter .dot {
    flex: none;
}

/* 图形区域 */
.canvas {
    flex: 1;
    min-width: 0;
    position: relative;
    background: #fff;
}
.model {
    display: block;
    width: 100%;
    height: 100%;
}
.axis {
    font: 12px "Liberation Mono", monospace;
}
.view-name {
    font: bold 12px "Liberation Mono", "Noto Sans CJK TC", monospace;
}
.hud,
.doc-btns {
    position: absolute;
    top: -20px;
    display: flex;
}
.hud {
    left: 50%;
    transform: translateX(-50%);
}
.hud .drop {
    width: 15px;
}
.hud .drop::before {
    border-top-color: #999;
}
.doc-btns {
    right: 7px;
    color: #999;
}
.taskpane {
    position: absolute;
    top: 23px;
    right: 0;
    width: 26px;
    display: flex;
    flex-direction: column;
    border: 1px solid #828282;
    border-width: 1px 0 0 1px;
}
.taskpane button {
    height: 24px;
    display: flex;
    align-items: center;
    justify-content: center;
    background: #d4d4d4;
    border-bottom: 1px solid #828282;
}
.taskpane .active {
    background: #fff;
}
.taskpane svg {
    width: 20px;
    height: 20px;
}

/* 底部 */
.sheet-tabs {
    height: 16px;
    flex: none;
    display: flex;
    border-top: 1px solid #828282;
    border-bottom: 1px solid #828282;
}
.sheet-tabs > button {
    line-height: 14px;
    padding: 0 7px;
    background: #d4d4d4;
    border-right: 1px solid #828282;
}
.sheet-tabs > button:last-child {
    padding-right: 14px;
}
.sheet-tabs > .active {
    padding: 0 9px 0 12px;
    background: #f7f7f7;
}
.nav {
    width: 67px;
    display: flex;
    gap: 1px;
    padding: 0 1px 0 2px;
    background: #777;
}
.nav button {
    flex: 1;
    display: flex;
    justify-content: center;
    background: #aaa;
}
.nav svg {
    width: 14px;
    height: 14px;
    fill: #999;
    stroke: #7c7c7c;
}
.status {
    height: 19px;
    flex: none;
    display: flex;
    align-items: center;
    padding-left: 1px;
    position: relative;
    font-family: "Inter", "Noto Sans CJK SC", sans-serif;
}
.product {
    flex: 1;
}
.cell {
    height: 16px;
    padding: 0 5px;
    border-right: 1px solid #c4c4c4;
}
.cell.gap {
    width: 8px;
    padding: 0;
}
.cell.edit {
    padding: 0 6px 0 4px;
}
.cell.blank {
    width: 16px;
    padding: 0;
}
.custom {
    width: 154px;
    padding-left: 30px;
    display: flex;
    align-items: center;
    gap: 17px;
}
.caret-up {
    border: 3px solid transparent;
    border-top: 0;
    border-bottom-color: #333;
}
.tag {
    width: 20px;
    height: 18px;
}
.badge {
    position: absolute;
    right: -27px;
    bottom: 3px;
    width: 46px;
    height: 46px;
    padding-left: 4px;
    border: 2px solid #fff;
    border-radius: 50%;
    background: radial-gradient(circle at 50% 20%, #8fe39a, #3fc35a 60%);
    box-shadow: inset 0 0 0 1px #2b8f45, 0 0 4px #888;
    color: #fff;
    font: bold 12px/42px "Open Sans", sans-serif;
}
```
